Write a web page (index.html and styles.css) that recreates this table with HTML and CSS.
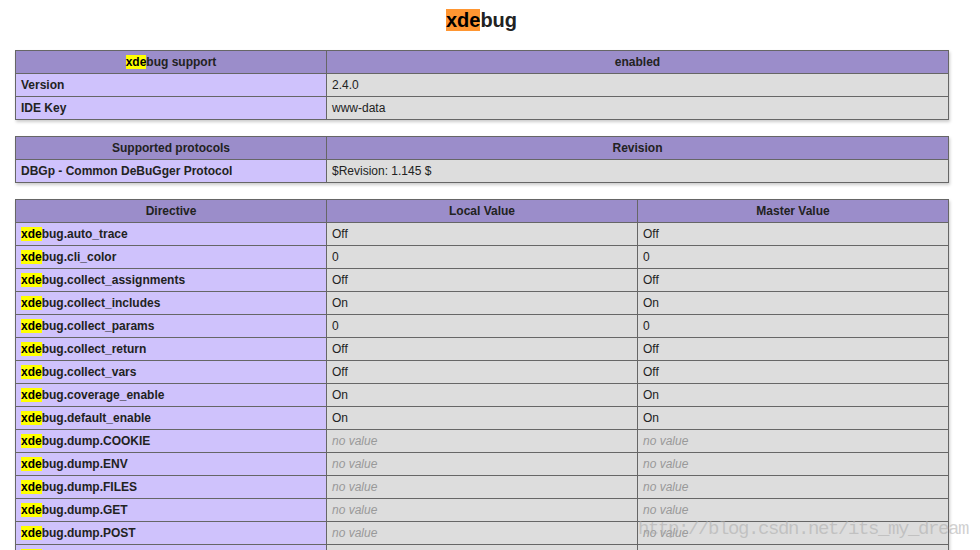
FILE: index.html
```html
<!DOCTYPE html>
<html>
<head>
<meta charset="utf-8">
<title>xdebug</title>
<link rel="stylesheet" href="styles.css">
</head>
<body>
<div class="center">
<h2><span class="hl-active">xde</span>bug</h2>
<table>
<tr class="h"><th><span class="hl">xde</span>bug support</th><th>enabled</th></tr>
<tr><td class="e">Version </td><td class="v">2.4.0 </td></tr>
<tr><td class="e">IDE Key </td><td class="v">www-data </td></tr>
</table>
<table>
<tr class="h"><th>Supported protocols</th><th>Revision</th></tr>
<tr><td class="e">DBGp - Common DeBuGger Protocol </td><td class="v">$Revision: 1.145 $ </td></tr>
</table>
<table class="dir">
<tr class="h"><th>Directive</th><th>Local Value</th><th>Master Value</th></tr>
<tr><td class="e"><span class="hl">xde</span>bug.auto_trace</td><td class="v">Off</td><td class="v">Off</td></tr>
<tr><td class="e"><span class="hl">xde</span>bug.cli_color</td><td class="v">0</td><td class="v">0</td></tr>
<tr><td class="e"><span class="hl">xde</span>bug.collect_assignments</td><td class="v">Off</td><td class="v">Off</td></tr>
<tr><td class="e"><span class="hl">xde</span>bug.collect_includes</td><td class="v">On</td><td class="v">On</td></tr>
<tr><td class="e"><span class="hl">xde</span>bug.collect_params</td><td class="v">0</td><td class="v">0</td></tr>
<tr><td class="e"><span class="hl">xde</span>bug.collect_return</td><td class="v">Off</td><td class="v">Off</td></tr>
<tr><td class="e"><span class="hl">xde</span>bug.collect_vars</td><td class="v">Off</td><td class="v">Off</td></tr>
<tr><td class="e"><span class="hl">xde</span>bug.coverage_enable</td><td class="v">On</td><td class="v">On</td></tr>
<tr><td class="e"><span class="hl">xde</span>bug.default_enable</td><td class="v">On</td><td class="v">On</td></tr>
<tr><td class="e"><span class="hl">xde</span>bug.dump.COOKIE</td><td class="v"><i>no value</i></td><td class="v"><i>no value</i></td></tr>
<tr><td class="e"><span class="hl">xde</span>bug.dump.ENV</td><td class="v"><i>no value</i></td><td class="v"><i>no value</i></td></tr>
<tr><td class="e"><span class="hl">xde</span>bug.dump.FILES</td><td class="v"><i>no value</i></td><td class="v"><i>no value</i></td></tr>
<tr><td class="e"><span class="hl">xde</span>bug.dump.GET</td><td class="v"><i>no value</i></td><td class="v"><i>no value</i></td></tr>
<tr><td class="e"><span class="hl">xde</span>bug.dump.POST</td><td class="v"><i>no value</i></td><td class="v"><i>no value</i></td></tr>
<tr><td class="e"><span class="hl">xde</span>bug.dump.REQUEST</td><td class="v"><i>no value</i></td><td class="v"><i>no value</i></td></tr>
</table>
</div>
<div class="watermark">http://blog.csdn.net/its_my_dream</div>
</body>
</html>
```
FILE: styles.css
```css
html, body {
  margin: 0;
  padding: 0;
  background: #fff;
  color: #222;
  font-family: "Liberation Sans", Arial, sans-serif;
  overflow: hidden;
}
.center {
  width: 963px;
  text-align: center;
}
h2 {
  font-size: 20px;
  line-height: 23px;
  font-weight: bold;
  margin: 9px 0 18px;
}
table {
  border-collapse: collapse;
  border: 0;
  width: 934px;
  margin: 16px 0 16px 15px;
  box-shadow: 1px 2px 3px #ccc;
  text-align: left;
}
h2 + table { margin-top: 0; }
td, th {
  border: 1px solid #666;
  font-size: 12px;
  line-height: 14px;
  vertical-align: baseline;
  padding: 4px 5px;
}
th { text-align: center; font-weight: bold; }
.h { background: #9b8dca; }
.e { background: #cfc2fc; width: 300px; font-weight: bold; }
.v { background: #ddd; }
.dir .v { width: 300px; }
.v i { color: #999; }
.hl { background: #ffff00; color: #000; }
.hl-active { background: #ff9632; color: #000; }
.watermark {
  position: absolute;
  left: 638px;
  top: 518px;
  font-family: "Liberation Mono", monospace;
  font-size: 19px;
  letter-spacing: -1.4px;
  color: rgba(170, 170, 170, 0.55);
  white-space: nowrap;
  pointer-events: none;
}
```
